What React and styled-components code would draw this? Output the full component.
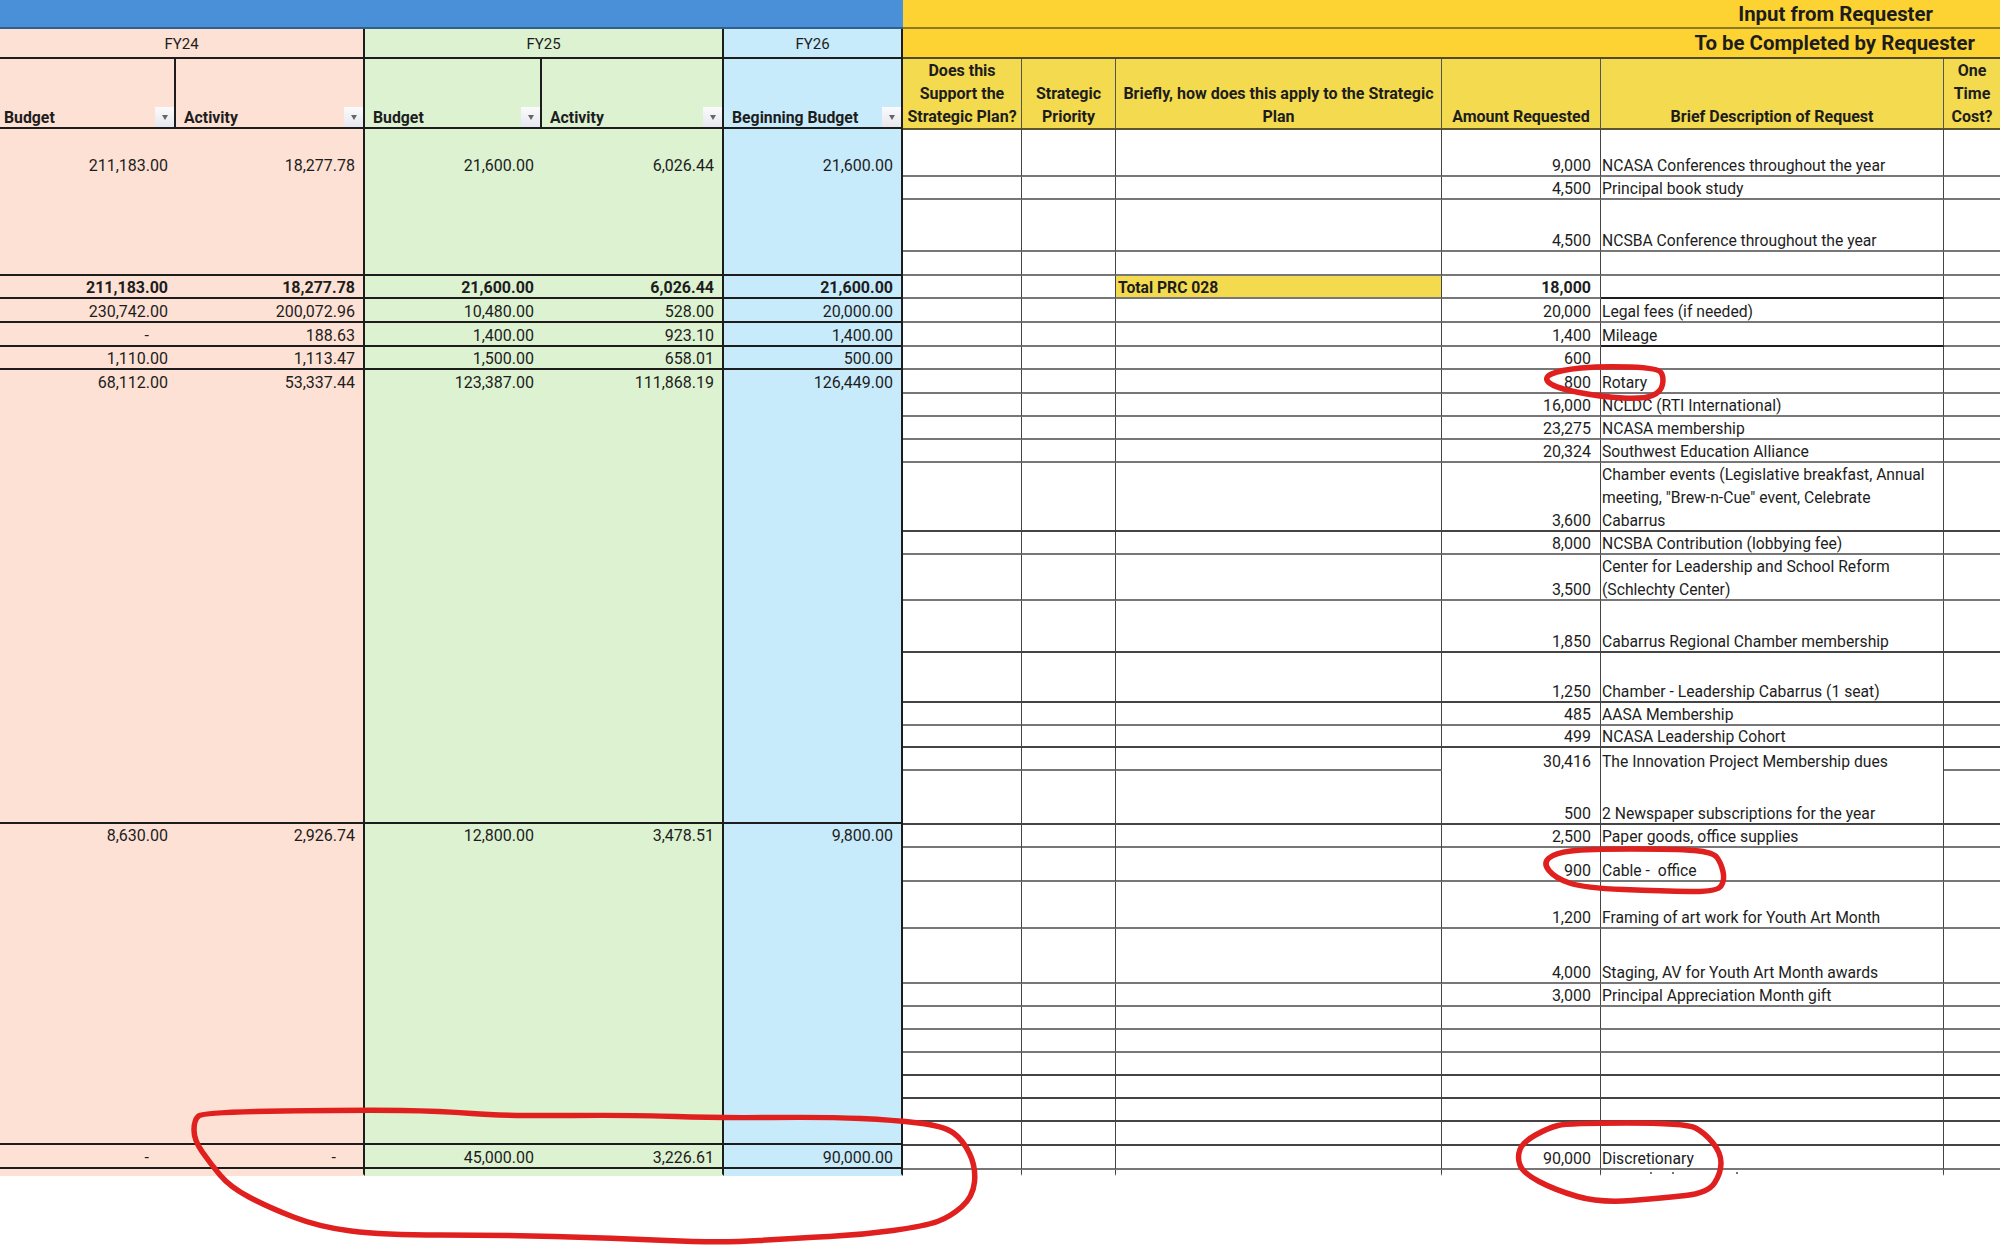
import React from 'react'
import styled, { createGlobalStyle } from 'styled-components'

const PEACH = '#fde1d4'
const GREEN = '#dcf2d1'
const BLUE = '#c8ebfb'
const INK = '#1d1d1d'

const GlobalStyle = createGlobalStyle`
  html, body {
    margin: 0;
    background: #fff;
  }
  body {
    font-family: Roboto, "Liberation Sans", sans-serif;
    color: ${INK};
  }
`

const Page = styled.div`
  position: relative;
  width: 2000px;
  height: 1246px;
  overflow: hidden;
`

const Sheet = styled.div`
  display: flex;
  align-items: flex-start;
`

const Panel = styled.section`
  display: flex;
  flex-direction: column;
  flex: ${p => (p.$fill ? '1' : '0 0 903px')};
`

const Bar = styled.div`
  height: ${p => p.$h}px;
  box-sizing: border-box;
  display: flex;
  align-items: center;
  justify-content: flex-end;
  padding-right: ${p => p.$pr || 0}px;
  background: ${p => p.$bg};
  border-bottom: 2px solid ${p => p.$line};
  font-size: 20.4px;
  font-weight: 700;
`

const LeftGrid = styled.div`
  display: grid;
  grid-template-columns: 176px 189px 177px 182px 179px;
  height: ${p => p.$h}px;
`

const RightGrid = styled.div`
  display: grid;
  grid-template-columns: 119px 94px 326px 159px 343px 56px;
  height: ${p => p.$h}px;
`

const GroupCell = styled.div`
  grid-column: span ${p => p.$span};
  box-sizing: border-box;
  display: flex;
  align-items: center;
  justify-content: center;
  padding-top: 2px;
  background: ${p => p.$bg};
  border-right: 2px solid ${INK};
  border-bottom: 2px solid ${INK};
  font-size: 15px;
`

const ColumnHead = styled.div`
  box-sizing: border-box;
  display: flex;
  align-items: flex-end;
  justify-content: space-between;
  padding-left: ${p => p.$pl}px;
  background: ${p => p.$bg};
  border-right: 2px solid ${INK};
  border-bottom: 2px solid ${INK};
  font-size: 15.8px;
  font-weight: 700;
`

const HeadLabel = styled.span`
  line-height: 23px;
  margin-bottom: -1.5px;
  white-space: nowrap;
`

const FilterButton = styled.span`
  flex: none;
  width: 19px;
  height: 20px;
  display: flex;
  align-items: center;
  justify-content: center;
  background: linear-gradient(#fbfbfd, #e6e7ee);
  &::after {
    content: '';
    border-left: 3px solid transparent;
    border-right: 3px solid transparent;
    border-top: 5px solid #666;
  }
`

const PromptHead = styled.div`
  box-sizing: border-box;
  display: flex;
  align-items: flex-end;
  justify-content: center;
  text-align: center;
  background: #f3da4f;
  border-right: 1px solid #555;
  border-bottom: 2px solid #5c5530;
  font-size: 16px;
  font-weight: 700;
  line-height: 23px;
  &:last-child {
    border-right: 0;
  }
  & > span {
    white-space: nowrap;
  }
`

const MoneyCell = styled.div`
  box-sizing: border-box;
  display: flex;
  justify-content: flex-end;
  align-items: ${p => (p.$top === undefined ? 'flex-end' : 'flex-start')};
  padding: ${p => p.$top || 0}px ${p => (p.$dash ? 27 : 8)}px 0 0;
  background: ${p => p.$bg};
  border-right: ${p => (p.$edge ? `2px solid ${INK}` : '0')};
  border-bottom: 2px solid ${p => (p.$last ? 'transparent' : INK)};
  font-size: 16px;
  font-weight: ${p => (p.$bold ? 700 : 400)};
`

const CellText = styled.span`
  line-height: 23px;
  margin-bottom: -2px;
  white-space: nowrap;
`

const PlainCell = styled.div`
  box-sizing: border-box;
  border-right: 1px solid #444;
  border-bottom: ${p => (p.$open ? '0' : `2px solid ${p.$rule}`)};
  &:last-child {
    border-right: 0;
  }
`

const AmountCell = styled(PlainCell)`
  display: flex;
  align-items: flex-end;
  justify-content: flex-end;
  padding-right: 9px;
  font-size: 16px;
  font-weight: ${p => (p.$bold ? 700 : 400)};
`

const DescCell = styled(PlainCell)`
  display: flex;
  align-items: flex-end;
  padding-left: 1px;
  font-size: 15.7px;
`

const TotalLabel = styled(PlainCell)`
  display: flex;
  align-items: flex-end;
  padding-left: 2px;
  background: #f3da4f;
  font-size: 15.7px;
  font-weight: 700;
`

const Specks = styled.div`
  display: flex;
  align-items: flex-end;
  height: 100%;
  padding-left: 48px;
  gap: 20px;
`

const Speck = styled.i`
  width: 2px;
  height: 2px;
  background: #777;
  margin-left: ${p => p.$gap || 0}px;
`

const Ink = styled.svg`
  position: absolute;
  inset: 0;
  pointer-events: none;
`

const Stroke = styled.path`
  fill: none;
  stroke: #e0201f;
  stroke-width: 5.5;
  stroke-linecap: round;
  stroke-linejoin: round;
`

const groups = [
  { label: 'FY24', span: 2, bg: PEACH },
  { label: 'FY25', span: 2, bg: GREEN },
  { label: 'FY26', span: 1, bg: BLUE },
]

const moneyColumns = [
  { label: 'Budget', bg: PEACH, pl: 4 },
  { label: 'Activity', bg: PEACH, pl: 8 },
  { label: 'Budget', bg: GREEN, pl: 8 },
  { label: 'Activity', bg: GREEN, pl: 8 },
  { label: 'Beginning Budget', bg: BLUE, pl: 8 },
]

const moneyRows = [
  { h: 147, top: 25, v: ['211,183.00', '18,277.78', '21,600.00', '6,026.44', '21,600.00'] },
  { h: 23, bold: true, v: ['211,183.00', '18,277.78', '21,600.00', '6,026.44', '21,600.00'] },
  { h: 24, v: ['230,742.00', '200,072.96', '10,480.00', '528.00', '20,000.00'] },
  { h: 24, v: ['-', '188.63', '1,400.00', '923.10', '1,400.00'] },
  { h: 23, v: ['1,110.00', '1,113.47', '1,500.00', '658.01', '500.00'] },
  { h: 454, top: 1, v: ['68,112.00', '53,337.44', '123,387.00', '111,868.19', '126,449.00'] },
  { h: 321, top: 0, v: ['8,630.00', '2,926.74', '12,800.00', '3,478.51', '9,800.00'] },
  { h: 24, v: ['-', '-', '45,000.00', '3,226.61', '90,000.00'] },
  { h: 7, last: true, v: ['', '', '', '', ''] },
]

const GRAY = '#777'
const DARK = '#444'

// h = row height, rule = colour of the line under it
const requestRows = [
  { h: 48, rule: GRAY, amount: '9,000', desc: ['NCASA Conferences throughout the year'] },
  { h: 23, rule: GRAY, amount: '4,500', desc: ['Principal book study'] },
  { h: 52, rule: GRAY, amount: '4,500', desc: ['NCSBA Conference throughout the year'] },
  { h: 24, rule: GRAY },
  { h: 23, rule: GRAY, amount: '18,000', total: true, descRule: INK },
  { h: 24, rule: GRAY, amount: '20,000', desc: ['Legal fees (if needed)'] },
  { h: 24, rule: GRAY, amount: '1,400', desc: ['Mileage'], descRule: INK },
  { h: 23, rule: GRAY, amount: '600' },
  { h: 24, rule: GRAY, amount: '800', desc: ['Rotary'] },
  { h: 23, rule: GRAY, amount: '16,000', desc: ['NCLDC (RTI International)'] },
  { h: 23, rule: GRAY, amount: '23,275', desc: ['NCASA membership'] },
  { h: 23, rule: GRAY, amount: '20,324', desc: ['Southwest Education Alliance'] },
  { h: 68, rule: DARK, amount: '3,600', desc: ['Chamber events (Legislative breakfast, Annual', 'meeting, "Brew-n-Cue" event, Celebrate', 'Cabarrus'] },
  { h: 24, rule: GRAY, amount: '8,000', desc: ['NCSBA Contribution (lobbying fee)'] },
  { h: 46, rule: GRAY, amount: '3,500', desc: ['Center for Leadership and School Reform', '(Schlechty Center)'] },
  { h: 52, rule: DARK, amount: '1,850', desc: ['Cabarrus Regional Chamber membership'] },
  { h: 50, rule: DARK, amount: '1,250', desc: ['Chamber - Leadership Cabarrus (1 seat)'] },
  { h: 22, rule: GRAY, amount: '485', desc: ['AASA Membership'] },
  { h: 23, rule: DARK, amount: '499', desc: ['NCASA Leadership Cohort'] },
  { h: 23, rule: GRAY, amount: '30,416', desc: ['The Innovation Project Membership dues'], open: true },
  { h: 54, rule: DARK, amount: '500', desc: ['2 Newspaper subscriptions for the year'] },
  { h: 22, rule: GRAY, amount: '2,500', desc: ['Paper goods, office supplies'] },
  { h: 35, rule: GRAY, amount: '900', desc: ['Cable -\u00a0 office'] },
  { h: 47, rule: GRAY, amount: '1,200', desc: ['Framing of art work for Youth Art Month'] },
  { h: 55, rule: GRAY, amount: '4,000', desc: ['Staging, AV for Youth Art Month awards'] },
  { h: 23, rule: GRAY, amount: '3,000', desc: ['Principal Appreciation Month gift'] },
  { h: 23, rule: GRAY },
  { h: 23, rule: GRAY },
  { h: 23, rule: DARK },
  { h: 23, rule: DARK },
  { h: 23, rule: DARK },
  { h: 24, rule: DARK },
  { h: 24, rule: GRAY, amount: '90,000', desc: ['Discretionary'] },
  { h: 6, rule: 'transparent', clipped: true },
]

const circles = [
  [[203, 1112], [363, 1110], [440, 1111], [504, 1116], [638, 1115], [714, 1118], [829, 1117], [893, 1120], [944, 1126], [963, 1140], [976, 1167], [973, 1197], [950, 1217], [925, 1226], [861, 1235], [797, 1238], [721, 1243], [612, 1238], [497, 1235], [383, 1235], [319, 1227], [268, 1207], [230, 1187], [210, 1163], [194, 1140], [194, 1120]],
  [[1658, 368], [1602, 366], [1560, 370], [1543, 378], [1556, 388], [1602, 397], [1644, 399], [1661, 392], [1664, 377]],
  [[1713, 852], [1676, 849], [1587, 849], [1555, 853], [1543, 863], [1555, 878], [1584, 888], [1663, 891], [1717, 892], [1725, 880], [1721, 863]],
  [[1686, 1123], [1568, 1123], [1548, 1128], [1523, 1142], [1517, 1157], [1523, 1173], [1555, 1190], [1600, 1203], [1663, 1198], [1708, 1193], [1721, 1173], [1721, 1153], [1705, 1133]],
]

// closed smooth curve through the midpoints of a hand-drawn outline
function smoothLoop(points) {
  const mid = (a, b) => [(a[0] + b[0]) / 2, (a[1] + b[1]) / 2]
  let d = `M${mid(points[points.length - 1], points[0]).join(' ')}`
  points.forEach((pt, i) => {
    const m = mid(pt, points[(i + 1) % points.length])
    d += ` Q${pt.join(' ')} ${m.join(' ')}`
  })
  return d + ' Z'
}

function RequestRow({ row }) {
  const { h, rule, amount, desc, total, open, descRule, clipped } = row
  return (
    <RightGrid $h={h}>
      <PlainCell $rule={rule} />
      <PlainCell $rule={rule} />
      {total ? (
        <TotalLabel $rule={rule}>
          <CellText>Total PRC 028</CellText>
        </TotalLabel>
      ) : (
        <PlainCell $rule={rule} />
      )}
      <AmountCell $rule={rule} $open={open} $bold={total}>
        {amount && <CellText>{amount}</CellText>}
      </AmountCell>
      <DescCell $rule={descRule || rule} $open={open}>
        {desc && (
          <CellText>
            {desc.map((line, i) => (
              <React.Fragment key={i}>
                {i > 0 && <br />}
                {line}
              </React.Fragment>
            ))}
          </CellText>
        )}
        {clipped && (
          <Specks>
            <Speck />
            <Speck />
            <Speck $gap={42} />
          </Specks>
        )}
      </DescCell>
      <PlainCell $rule={rule} />
    </RightGrid>
  )
}

export default function App() {
  return (
    <Page>
      <GlobalStyle />
      <Sheet>
        <Panel>
          <Bar $h={29} $bg="#4a90d9" $line="#2f5f8f" />
          <LeftGrid $h={30}>
            {groups.map(g => (
              <GroupCell key={g.label} $span={g.span} $bg={g.bg}>{g.label}</GroupCell>
            ))}
          </LeftGrid>
          <LeftGrid $h={70}>
            {moneyColumns.map((c, i) => (
              <ColumnHead key={i} $bg={c.bg} $pl={c.pl}>
                <HeadLabel>{c.label}</HeadLabel>
                <FilterButton />
              </ColumnHead>
            ))}
          </LeftGrid>
          {moneyRows.map((row, r) => (
            <LeftGrid key={r} $h={row.h}>
              {row.v.map((val, i) => (
                <MoneyCell
                  key={i}
                  $bg={moneyColumns[i].bg}
                  $edge={i === 1 || i === 3 || i === 4}
                  $top={row.top}
                  $bold={row.bold}
                  $last={row.last}
                  $dash={val === '-'}
                >
                  {val && <CellText>{val}</CellText>}
                </MoneyCell>
              ))}
            </LeftGrid>
          ))}
        </Panel>
        <Panel $fill>
          <Bar $h={29} $bg="#fdd333" $line="#8a7a28" $pr={67}>Input from Requester</Bar>
          <Bar $h={30} $bg="#fdd333" $line="#4f4a28" $pr={25}>To be Completed by Requester</Bar>
          <RightGrid $h={70}>
            <PromptHead><span>Does this<br />Support the<br />Strategic Plan?</span></PromptHead>
            <PromptHead><span>Strategic<br />Priority</span></PromptHead>
            <PromptHead><span>Briefly, how does this apply to the Strategic<br />Plan</span></PromptHead>
            <PromptHead><span>Amount Requested</span></PromptHead>
            <PromptHead><span>Brief Description of Request</span></PromptHead>
            <PromptHead><span>One<br />Time<br />Cost?</span></PromptHead>
          </RightGrid>
          {requestRows.map((row, r) => (
            <RequestRow key={r} row={row} />
          ))}
        </Panel>
      </Sheet>
      <Ink width="2000" height="1246" viewBox="0 0 2000 1246">
        {circles.map((pts, i) => (
          <Stroke key={i} d={smoothLoop(pts)} />
        ))}
      </Ink>
    </Page>
  )
}
